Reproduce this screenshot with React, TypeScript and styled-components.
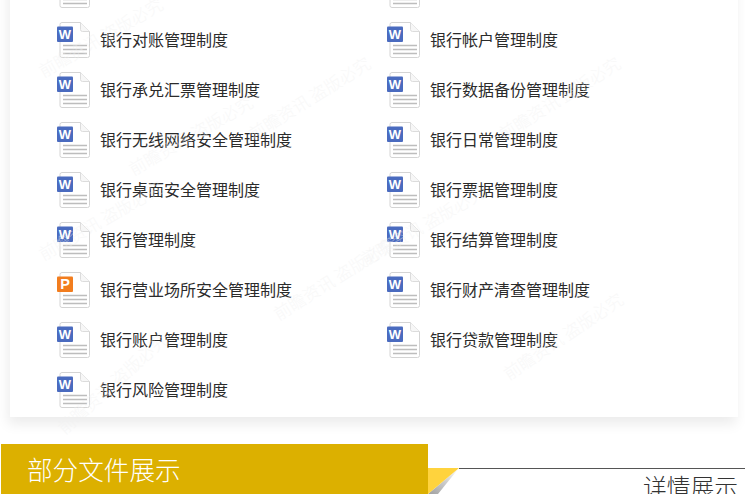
import React from 'react';
import styled, { createGlobalStyle } from 'styled-components';

const GlobalStyle = createGlobalStyle`
  html, body {
    margin: 0;
    padding: 0;
    background: #fff;
    overflow: hidden;
  }
`;

const Page = styled.div`
  position: relative;
  width: 745px;
  height: 494px;
  overflow: hidden;
  background: #fff;
  font-family: "Noto Sans CJK SC", "Liberation Sans", sans-serif;
`;

const Card = styled.section`
  margin: -50px 7px 27px 10px;
  padding: 15px 0 2px 47px;
  background: #fff;
  box-shadow: -2px 7px 12px rgba(0, 0, 0, 0.08);
`;

const FileGrid = styled.ul`
  display: grid;
  grid-template-columns: 330px 1fr;
  grid-auto-rows: 50px;
  margin: 0;
  padding: 0;
  list-style: none;
`;

const FileRow = styled.li`
  display: flex;
  align-items: center;
  gap: 9px;
`;

const FileName = styled.span`
  margin-bottom: 2px;
  font-size: 16px;
  line-height: 22px;
  color: #2b2b2b;
`;

const Watermark = styled.span<{ $x: number; $y: number; $angle: number }>`
  position: absolute;
  left: ${p => p.$x}px;
  top: ${p => p.$y}px;
  transform: rotate(${p => p.$angle}deg);
  transform-origin: left center;
  font-family: "Noto Sans CJK SC", "Liberation Serif", serif;
  font-weight: 300;
  font-size: 17px;
  line-height: 20px;
  white-space: nowrap;
  color: #f1f1f1;
  opacity: 0.45;
  pointer-events: none;
`;

const Footer = styled.div`
  display: flex;
  margin-left: 1px;
  height: 50px;
`;

const Banner = styled.h2`
  flex: 0 0 427px;
  box-sizing: border-box;
  height: 50px;
  margin: 0;
  padding-left: 26px;
  background: #dcb000;
  color: #fff;
  font-size: 25.6px;
  font-weight: 300;
  line-height: 50px;
`;

const Fold = styled.svg`
  flex: 0 0 31px;
  display: block;
  width: 31px;
  height: 26px;
  margin-top: 24px;
`;

const DetailHead = styled.div`
  flex: 1;
  margin-top: 24px;
  padding-right: 7px;
  border-top: 1px solid #555;
  text-align: right;
  font-size: 23.75px;
  font-weight: 300;
  line-height: 34px;
  color: #333;
`;

type Kind = 'word' | 'ppt' | 'clipped';

const FileIcon: React.FC<{ kind: Kind }> = ({ kind }) => {
  const word = kind === 'word';
  return (
    <svg width="34" height="36" viewBox="0 0 34 36" style={{ flex: 'none' }}>
      <path
        d="M5 .5H23.5L32.5 9.5V33.5a2 2 0 0 1-2 2H5a2 2 0 0 1-2-2V2.5a2 2 0 0 1 2-2Z"
        fill="#fff"
        stroke="#d4d4d4"
      />
      <path d="M23.5 .5V7.5a2 2 0 0 0 2 2H32.5" fill="#f7f7f7" stroke="#dcdcdc" />
      <path d="M6 23.5H30M6 27.5H30M6 31.5H30" stroke="#bdbdbd" strokeWidth="1.4" />
      {kind !== 'clipped' && (
        <>
          <rect x="0" y="4.5" width="16" height="15.5" rx="1" fill={word ? '#4a6bbf' : '#f27d1e'} />
          <text
            x="8"
            y="17"
            textAnchor="middle"
            fontFamily="'Liberation Sans', sans-serif"
            fontWeight="700"
            fontSize={word ? 13 : 14.5}
            fill="#fff"
          >
            {word ? 'W' : 'P'}
          </text>
        </>
      )}
    </svg>
  );
};

const files: { name?: string; kind: Kind }[] = [
  { kind: 'clipped' },
  { kind: 'clipped' },
  { name: '银行对账管理制度', kind: 'word' },
  { name: '银行帐户管理制度', kind: 'word' },
  { name: '银行承兑汇票管理制度', kind: 'word' },
  { name: '银行数据备份管理制度', kind: 'word' },
  { name: '银行无线网络安全管理制度', kind: 'word' },
  { name: '银行日常管理制度', kind: 'word' },
  { name: '银行桌面安全管理制度', kind: 'word' },
  { name: '银行票据管理制度', kind: 'word' },
  { name: '银行管理制度', kind: 'word' },
  { name: '银行结算管理制度', kind: 'word' },
  { name: '银行营业场所安全管理制度', kind: 'ppt' },
  { name: '银行财产清查管理制度', kind: 'word' },
  { name: '银行账户管理制度', kind: 'word' },
  { name: '银行贷款管理制度', kind: 'word' },
  { name: '银行风险管理制度', kind: 'word' },
];

const marks = [
  { x: 40, y: 62, angle: -30 },
  { x: 130, y: 160, angle: -30 },
  { x: 40, y: 245, angle: -30 },
  { x: 250, y: 125, angle: -32 },
  { x: 362, y: 250, angle: -30 },
  { x: 275, y: 305, angle: -32 },
  { x: 505, y: 365, angle: -34 },
  { x: 500, y: 125, angle: -32 },
  { x: 60, y: 420, angle: -42 },
];

export default function App() {
  return (
    <Page>
      <GlobalStyle />
      <Card>
        <FileGrid>
          {files.map((f, i) => (
            <FileRow key={i}>
              <FileIcon kind={f.kind} />
              {f.name && <FileName>{f.name}</FileName>}
            </FileRow>
          ))}
        </FileGrid>
      </Card>
      {marks.map((m, i) => (
        <Watermark key={i} $x={m.x} $y={m.y} $angle={m.angle}>
          前瞻资讯 盗版必究
        </Watermark>
      ))}
      <Footer>
        <Banner>部分文件展示</Banner>
        <Fold viewBox="0 0 31 26">
          <defs>
            <linearGradient id="foldShade" x1="1" y1="0" x2="0" y2="1">
              <stop offset="0" stopColor="#fff" />
              <stop offset="0.5" stopColor="#b5b5b5" />
              <stop offset="1" stopColor="#777" />
            </linearGradient>
          </defs>
          <path d="M0 26L31 0L10 26Z" fill="url(#foldShade)" opacity="0.7" />
          <path d="M0 0H31L0 26Z" fill="#ffd33d" />
        </Fold>
        <DetailHead>详情展示</DetailHead>
      </Footer>
    </Page>
  );
}
